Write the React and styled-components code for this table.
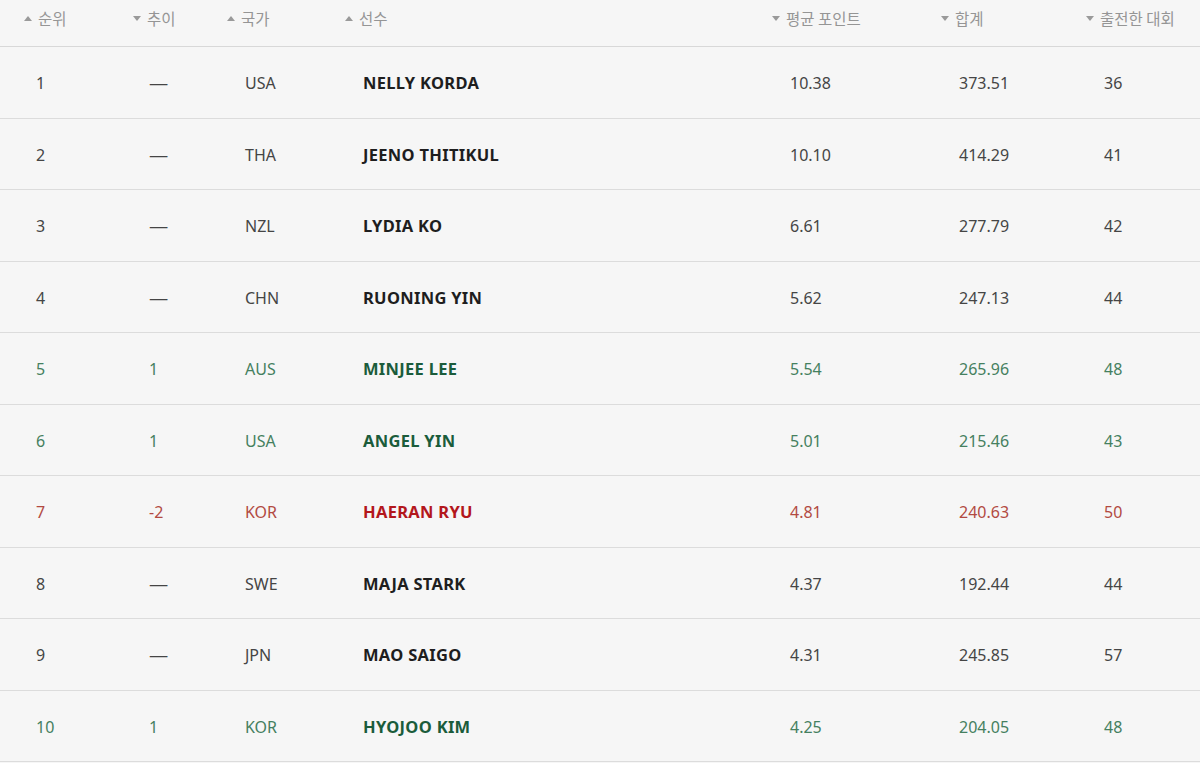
import React from 'react';
import styled, { createGlobalStyle } from 'styled-components';

const GlobalStyle = createGlobalStyle`
  html, body {
    margin: 0;
    padding: 0;
    background: #f6f6f6;
  }
  body {
    font-family: "Noto Sans", "Noto Sans CJK KR", sans-serif;
  }
`;

const COLUMNS = '109px 94px 118px 427px 169px 145px 1fr';

const COLORS = {
  same: { text: '#454545', name: '#1e1e1e' },
  up: { text: '#45805f', name: '#1b5c3b' },
  down: { text: '#b24a42', name: '#b3171c' },
};

const headers = [
  { label: '순위', dir: 'up' },
  { label: '추이', dir: 'down' },
  { label: '국가', dir: 'up' },
  { label: '선수', dir: 'up' },
  { label: '평균 포인트', dir: 'down' },
  { label: '합계', dir: 'down' },
  { label: '출전한 대회', dir: 'down' },
];

const players = [
  { rank: 1, trend: '—', country: 'USA', name: 'NELLY KORDA', avg: '10.38', total: '373.51', events: 36, state: 'same' },
  { rank: 2, trend: '—', country: 'THA', name: 'JEENO THITIKUL', avg: '10.10', total: '414.29', events: 41, state: 'same' },
  { rank: 3, trend: '—', country: 'NZL', name: 'LYDIA KO', avg: '6.61', total: '277.79', events: 42, state: 'same' },
  { rank: 4, trend: '—', country: 'CHN', name: 'RUONING YIN', avg: '5.62', total: '247.13', events: 44, state: 'same' },
  { rank: 5, trend: '1', country: 'AUS', name: 'MINJEE LEE', avg: '5.54', total: '265.96', events: 48, state: 'up' },
  { rank: 6, trend: '1', country: 'USA', name: 'ANGEL YIN', avg: '5.01', total: '215.46', events: 43, state: 'up' },
  { rank: 7, trend: '-2', country: 'KOR', name: 'HAERAN RYU', avg: '4.81', total: '240.63', events: 50, state: 'down' },
  { rank: 8, trend: '—', country: 'SWE', name: 'MAJA STARK', avg: '4.37', total: '192.44', events: 44, state: 'same' },
  { rank: 9, trend: '—', country: 'JPN', name: 'MAO SAIGO', avg: '4.31', total: '245.85', events: 57, state: 'same' },
  { rank: 10, trend: '1', country: 'KOR', name: 'HYOJOO KIM', avg: '4.25', total: '204.05', events: 48, state: 'up' },
];

const Table = styled.div`
  width: 1200px;
  background: #f6f6f6;
`;

const HeaderRow = styled.div`
  display: grid;
  grid-template-columns: ${COLUMNS};
  height: 46px;
  padding-left: 24px;
  border-bottom: 1px solid #d8d8d8;
  box-sizing: content-box;
`;

const HeaderCell = styled.div`
  display: flex;
  align-items: center;
  gap: 6px;
  height: 20px;
  margin-top: 8px;
  font-family: "Noto Sans CJK KR", "Noto Sans", sans-serif;
  font-size: 15.5px;
  color: #959595;
  cursor: pointer;
  user-select: none;
`;

const Arrow = styled.span`
  width: 0;
  height: 0;
  border-left: 4px solid transparent;
  border-right: 4px solid transparent;
  ${props => props.$dir === 'up'
    ? 'border-bottom: 5px solid #9a9a9a;'
    : 'border-top: 5px solid #9a9a9a;'}
`;

const Row = styled.div`
  display: grid;
  grid-template-columns: ${COLUMNS};
  align-items: center;
  height: 70.5px;
  padding-left: 24px;
  border-bottom: 1px solid #dcdcdc;
  box-sizing: content-box;
  color: ${props => COLORS[props.$state].text};
`;

const Cell = styled.div`
  padding-left: ${props => props.$indent || 18}px;
  padding-top: 2px;
  font-size: 16px;
  line-height: 22px;
  white-space: nowrap;
`;

const Dash = styled.span`
  display: inline-block;
  transform: scaleX(1.2);
  transform-origin: left center;
`;

const Name = styled(Cell)`
  font-weight: 700;
  font-size: 16.5px;
  letter-spacing: 0.3px;
  color: ${props => COLORS[props.$state].name};
`;

const App = () => (
  <>
    <GlobalStyle />
    <Table>
      <HeaderRow>
        { headers.map(h => (
          <HeaderCell key={ h.label }>
            <Arrow $dir={ h.dir } />
            <span>{ h.label }</span>
          </HeaderCell>
        )) }
      </HeaderRow>
      { players.map(p => (
        <Row key={ p.rank } $state={ p.state }>
          <Cell $indent={ 12 }>{ p.rank }</Cell>
          <Cell $indent={ 16 }>{ p.trend === '—' ? <Dash>—</Dash> : p.trend }</Cell>
          <Cell>{ p.country }</Cell>
          <Name $state={ p.state }>{ p.name }</Name>
          <Cell>{ p.avg }</Cell>
          <Cell>{ p.total }</Cell>
          <Cell>{ p.events }</Cell>
        </Row>
      )) }
    </Table>
  </>
);

export default App;
